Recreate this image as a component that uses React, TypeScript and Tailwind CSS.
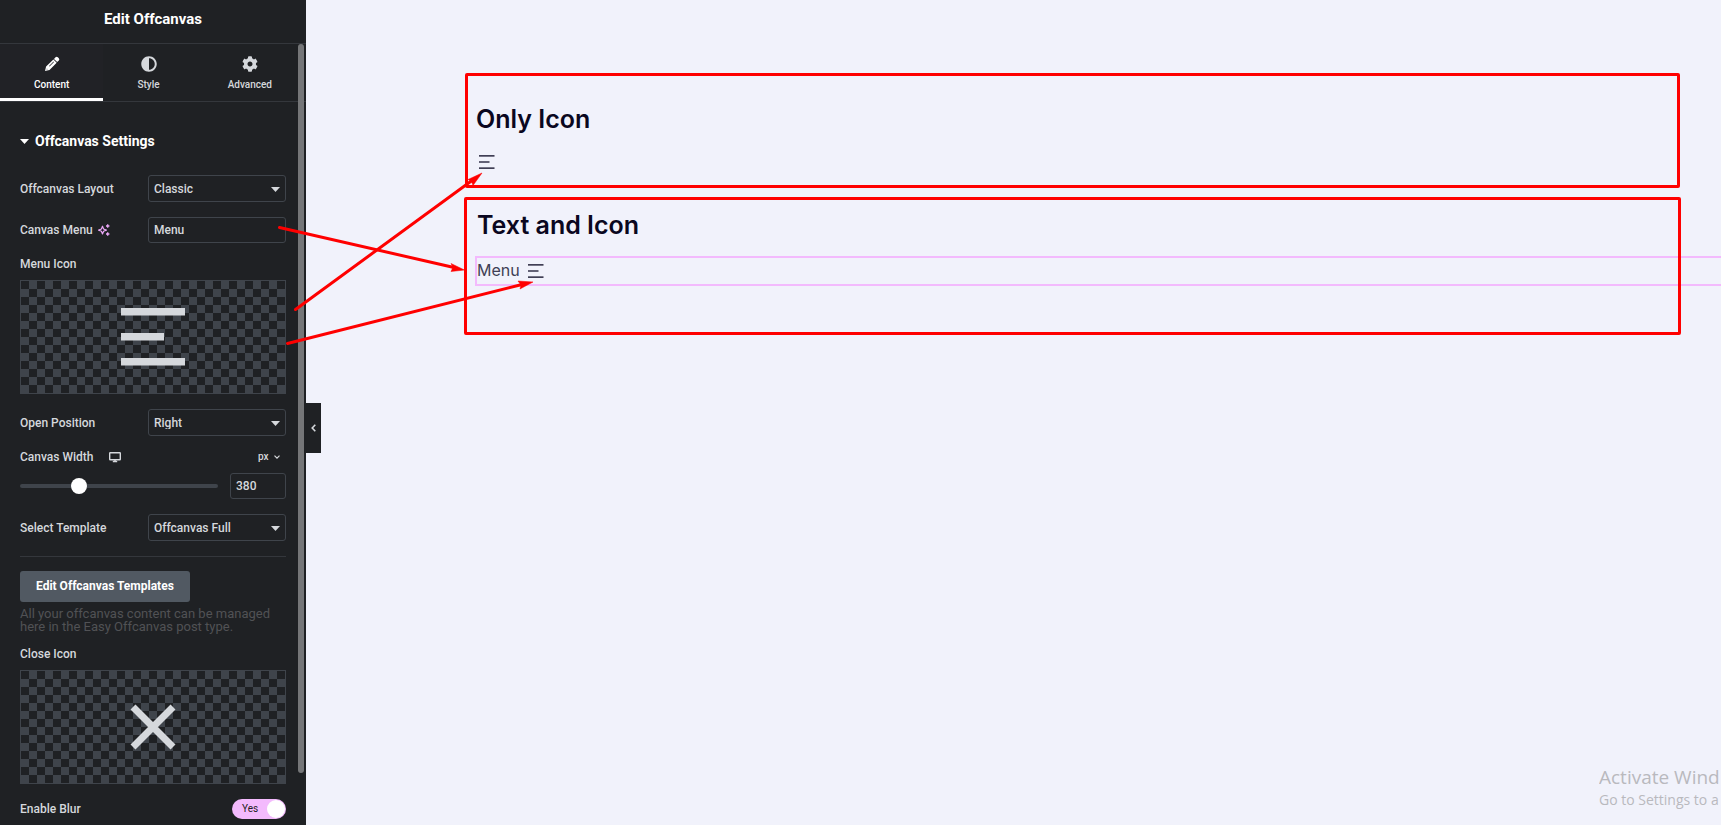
import { useState } from 'react'
import type { ReactNode } from 'react'
import { FaAdjust, FaCog } from 'react-icons/fa'

const PencilIcon = () => (
  <svg viewBox="0 0 16 16" className="h-4 w-4" fill="currentColor">
    <path d="M10 2.900 11.500 1.300a1.700 1.700 0 0 1 2.300 0l1 1a1.700 1.700 0 0 1 0 2.300l-1.600 1.500z" />
    <path fillRule="evenodd" d="M9.400 3.500 12.700 6.700 5.500 13.900 1 15l1.100-4.400zM9.500 5.600 5 10l.5.5L10 6.100zM2.900 12.400l-.4 1.200 1.200-.4z" />
  </svg>
)

const SparklesIcon = () => (
  <svg viewBox="0 0 12 12" className="h-3 w-3" fill="none" stroke="#eba8f7">
    <path d="M4.500 2.200 5.600 5 8.400 6.100 5.600 7.200 4.500 10 3.400 7.200.6 6.100 3.400 5z" strokeWidth="1.200" strokeLinejoin="round" />
    <path d="M9.700.3v3.400M8 2h3.400M9.700 8.300v3.400M8 10h3.400" strokeWidth="1.300" />
  </svg>
)

const MonitorIcon = () => (
  <svg viewBox="0 0 12 12" className="h-3 w-3" fill="none" stroke="currentColor">
    <rect x="0.7" y="1.700" width="10.600" height="7" rx="0.500" strokeWidth="1.400" />
    <path d="M3.800 10.500h4.400M6 9v2" strokeWidth="1.600" />
  </svg>
)

const Caret = ({ className = '' }: { className?: string }) => (
  <svg viewBox="0 0 9 5" className={`h-[5px] w-[9px] ${className}`} fill="currentColor">
    <path d="M0 0h9L4.500 5z" />
  </svg>
)

const MenuLines = () => (
  <svg viewBox="0 0 16 14" className="h-[14px] w-4" fill="#403f55">
    <rect width="15.500" height="1.700" />
    <rect y="6.200" width="10.500" height="1.600" />
    <rect y="12.300" width="15.500" height="1.700" />
  </svg>
)

const tabs = [
  { name: 'Content', icon: <PencilIcon /> },
  { name: 'Style', icon: <FaAdjust size={16} /> },
  { name: 'Advanced', icon: <FaCog size={16} /> },
]

interface SelectRowProps {
  id: string
  label: string
  options: string[]
}

const SelectRow = ({ id, label, options }: SelectRowProps) => (
  <div className="flex items-center justify-between">
    <label htmlFor={id}>{label}</label>
    <div className="relative w-[138px]">
      <select
        id={id}
        className="block h-[27px] w-full appearance-none rounded-[3px] border border-[#3f444b] bg-transparent px-[5px] outline-none"
      >
        {options.map((option) => (
          <option key={option}>{option}</option>
        ))}
      </select>
      <Caret className="pointer-events-none absolute top-3 right-[6px]" />
    </div>
  </div>
)

const IconPicker = ({ label, children }: { label: string; children: ReactNode }) => (
  <div className="flex flex-col gap-[10px]">
    <span>{label}</span>
    <button
      aria-label={label}
      className="flex h-[114px] items-center justify-center border border-[#3f444b] bg-[conic-gradient(#3f444b_25%,#1f2124_0_50%,#3f444b_0_75%,#1f2124_0)] bg-[length:16px_16px]"
    >
      {children}
    </button>
  </div>
)

const Panel = () => {
  const [activeTab, setActiveTab] = useState('Content')
  const [menuText, setMenuText] = useState('Menu')
  const [width, setWidth] = useState('380')
  const [blur, setBlur] = useState(true)

  return (
    <aside className="relative flex w-[306px] shrink-0 flex-col bg-[#1f2124] font-[Roboto,sans-serif] text-xs leading-3 font-medium text-[#d5d8dc]">
      <header className="h-[44px] border-b border-[#34373c] pt-2 text-center">
        <h1 className="text-[15px] leading-[22px] font-bold text-white">Edit Offcanvas</h1>
      </header>

      <div className="relative min-h-0 flex-1">
        <div className="h-full overflow-hidden">
          <nav className="flex h-[58px] border-b border-[#34373c]">
            {tabs.map((tab) => (
              <button
                key={tab.name}
                onClick={() => setActiveTab(tab.name)}
                className={`flex flex-auto flex-col items-center gap-[7px] border-b-3 pt-3 text-[10px] leading-3 ${
                  activeTab === tab.name ? 'border-white bg-[#212226] text-white' : 'border-transparent'
                }`}
              >
                {tab.icon}
                {tab.name}
              </button>
            ))}
          </nav>

          <div className="flex flex-col gap-[15px] px-5">
            <h2 className="mt-8 mb-3 flex items-center gap-[6px] text-sm leading-[14px] font-bold text-white">
              <Caret />
              Offcanvas Settings
            </h2>

            <SelectRow id="layout" label="Offcanvas Layout" options={['Classic']} />

            <div className="flex items-center justify-between">
              <div className="flex items-center gap-[5px]">
                <label htmlFor="canvas-menu">Canvas Menu</label>
                <SparklesIcon />
              </div>
              <input
                id="canvas-menu"
                value={menuText}
                onChange={(e) => setMenuText(e.target.value)}
                className="h-[26px] w-[138px] rounded-[3px] border border-[#3f444b] bg-transparent px-[5px] outline-none"
              />
            </div>

            <IconPicker label="Menu Icon">
              <svg viewBox="0 0 64 58" className="h-[58px] w-16" fill="#d5d8dc">
                <rect width="64" height="7.500" />
                <rect y="25" width="43" height="7.500" />
                <rect y="50" width="64" height="7.500" />
              </svg>
            </IconPicker>

            <SelectRow id="position" label="Open Position" options={['Right', 'Left']} />

            <div className="flex flex-col gap-[10px]">
              <div className="flex items-center">
                <label htmlFor="canvas-width">Canvas Width</label>
                <button aria-label="Desktop" className="ml-[15px]">
                  <MonitorIcon />
                </button>
                <div className="relative ml-auto w-[28px]">
                  <select aria-label="Unit" className="block h-3 w-full appearance-none bg-transparent text-[10px] leading-3 outline-none">
                    <option>px</option>
                    <option>%</option>
                  </select>
                  <svg viewBox="0 0 6 4" className="pointer-events-none absolute top-1 right-[6px] h-1 w-[6px]" fill="none" stroke="currentColor" strokeWidth="1.200">
                    <path d="M.5.600 3 3.100 5.500.6" />
                  </svg>
                </div>
              </div>
              <div className="flex items-center gap-3">
                <input
                  type="range"
                  aria-label="Canvas width slider"
                  min={100}
                  max={1100}
                  value={width}
                  onChange={(e) => setWidth(e.target.value)}
                  className="h-1 min-w-0 flex-1 appearance-none rounded-full bg-[#3f444b] [&::-webkit-slider-thumb]:h-4 [&::-webkit-slider-thumb]:w-4 [&::-webkit-slider-thumb]:appearance-none [&::-webkit-slider-thumb]:rounded-full [&::-webkit-slider-thumb]:bg-white"
                />
                <input
                  id="canvas-width"
                  value={width}
                  onChange={(e) => setWidth(e.target.value)}
                  className="h-[26px] w-14 rounded-[3px] border border-[#3f444b] bg-transparent px-[5px] outline-none"
                />
              </div>
            </div>

            <SelectRow id="template" label="Select Template" options={['Offcanvas Full']} />

            <div className="border-t border-[#34373c] pt-[14px]">
              <button className="h-[31px] rounded-[3px] bg-[#515962] px-4 pb-[2px] font-bold text-white">Edit Offcanvas Templates</button>
              <p className="mt-[5px] text-[13px] leading-[13px] font-normal text-[#515255]">
                All your offcanvas content can be managed here in the Easy Offcanvas post type.
              </p>
            </div>

            <IconPicker label="Close Icon">
              <svg viewBox="0 0 46 46" className="h-[46px] w-[46px]" stroke="#d5d8dc" strokeWidth="7">
                <path d="M3 3 43 43M43 3 3 43" />
              </svg>
            </IconPicker>

            <div className="flex items-center justify-between">
              <label htmlFor="blur">Enable Blur</label>
              <label className="flex h-5 w-[54px] cursor-pointer items-center justify-between rounded-full bg-[#f3bafd] pr-px pl-[10px] text-[10px] font-normal text-[#1f2124]">
                <input id="blur" type="checkbox" checked={blur} onChange={(e) => setBlur(e.target.checked)} className="sr-only" />
                {blur ? 'Yes' : 'No'}
                <span className="h-[18px] w-[18px] rounded-full bg-white" />
              </label>
            </div>
          </div>
        </div>
        <div className="absolute top-0 right-[2px] bottom-[52px] w-[6px] rounded-full bg-[#757678]" />
      </div>

      <button aria-label="Hide panel" className="absolute top-[403px] left-full flex h-[50px] w-[15px] items-center justify-center bg-[#1f2124]">
        <svg viewBox="0 0 5 8" className="h-2 w-[5px]" fill="none" stroke="currentColor" strokeWidth="1.600">
          <path d="M4.300.8 1.200 4l3.100 3.200" />
        </svg>
      </button>
    </aside>
  )
}

// Red frame that sits over a block of the preview
const Frame = () => <span className="pointer-events-none absolute inset-0 rounded-[2px] border-3 border-[#ff0000]" />

const Preview = () => (
  <main className="relative min-w-0 flex-1 overflow-hidden pt-[73px] pr-10 pl-[158px] font-[Inter,sans-serif] text-[#403f55]">
    <section className="relative mx-px h-[115px] pt-[30px] pl-[11px]">
      <h2 className="text-[25px] leading-8 font-semibold text-[#0a0720]">Only Icon</h2>
      <button aria-label="Open menu" className="mt-5 ml-[3px] block">
        <MenuLines />
      </button>
      <Frame />
    </section>

    <section className="relative mt-[9px] h-[138px] pt-[12px] pl-[11px]">
      <h2 className="pl-[2px] text-[25px] leading-8 font-semibold text-[#0a0720]">Text and Icon</h2>
      <div className="mt-[15px] -mr-12 border-2 border-[#f3bafd]">
        <button className="flex h-[26px] items-center gap-2 text-base">
          <span className="pb-[2px]">Menu</span>
          <MenuLines />
        </button>
      </div>
      <Frame />
    </section>

    <div className="absolute right-0 bottom-0 w-[122px] overflow-hidden pb-[15px] font-['Open_Sans','Noto_Sans',sans-serif] whitespace-nowrap text-[#b9b9be]">
      <p className="text-[19px] leading-[26px]">Activate Wind</p>
      <p className="text-sm leading-5">Go to Settings to a</p>
    </div>
  </main>
)

const arrows = [
  { line: 'M279.500 227.500 454 267.500', head: '464.500,270 451,263.500 453,267.300 451,271.500' },
  { line: 'M295.500 309.500 472 180.500', head: '482,173 468,179.500 471.500,181.500 473,185.500' },
  { line: 'M287.500 343.500 522 284.500', head: '533,282 518,281 521,285 520,289' },
]

const App = () => (
  <div className="relative flex h-screen overflow-hidden bg-[#f1f2fb]">
    <Panel />
    <Preview />
    <svg className="pointer-events-none absolute top-0 left-0 h-[400px] w-[600px]" fill="#ff0000" stroke="#ff0000">
      {arrows.map((arrow) => (
        <g key={arrow.line}>
          <path d={arrow.line} strokeWidth="3" strokeLinecap="round" />
          <polygon points={arrow.head} strokeWidth="0.500" />
        </g>
      ))}
    </svg>
  </div>
)

export default App
